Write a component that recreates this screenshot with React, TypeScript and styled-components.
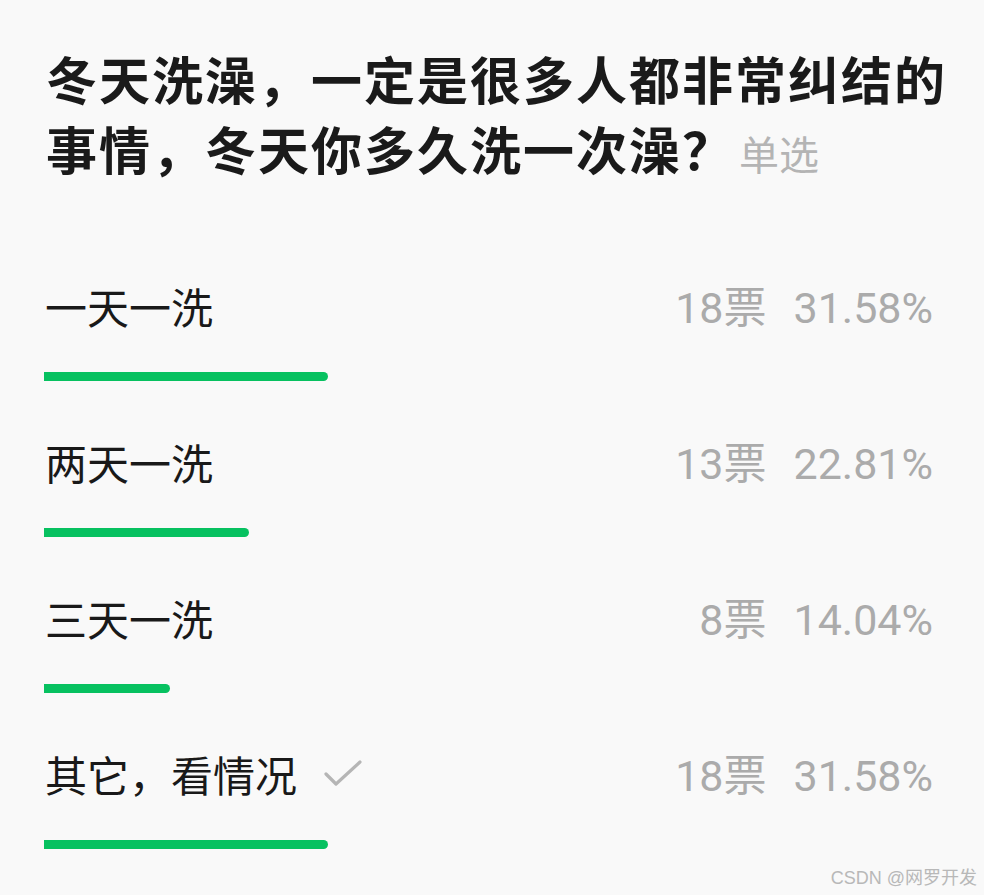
import React, { FC } from 'react';
import styled, { createGlobalStyle } from 'styled-components';

const GlobalStyle = createGlobalStyle`
  html, body {
    margin: 0;
    padding: 0;
    background: #f9f9f9;
  }
`;

const Page = styled.div`
  position: relative;
  box-sizing: border-box;
  width: 984px;
  height: 895px;
  padding: 43px 40px 0 44px;
  background: #f9f9f9;
  font-family: 'Noto Sans CJK SC', sans-serif;
  overflow: hidden;
`;

const Title = styled.h1`
  margin: 0 0 87px 2px;
  font-size: 51px;
  line-height: 70px;
  font-weight: 700;
  letter-spacing: 2px;
  color: #1a1a1a;
  white-space: nowrap;
`;

const Tag = styled.span`
  margin-left: 4px;
  font-size: 40px;
  font-weight: 400;
  letter-spacing: 0;
  color: #b4b4b4;
`;

const Option = styled.div`
  margin-bottom: 50px;
`;

const Header = styled.div`
  display: flex;
  align-items: center;
  justify-content: space-between;
  height: 60px;
  padding-right: 11px;
`;

const Label = styled.div`
  display: flex;
  align-items: center;
  gap: 27px;
  font-size: 42px;
  color: #191919;
  padding-left: 1px;
`;

const Stats = styled.div`
  display: flex;
  align-items: center;
  gap: 27px;
  padding-top: 5px;
  font-family: Roboto, 'Noto Sans CJK SC', sans-serif;
  font-size: 43px;
  line-height: 60px;
  color: #ababab;
`;

const Track = styled.div`
  margin-top: 37px;
  width: 900px;
  height: 9px;
`;

const Fill = styled.div`
  height: 100%;
  background: #07c160;
  border-radius: 0 5px 5px 0;
`;

const Watermark = styled.div`
  position: absolute;
  right: 7px;
  bottom: 6px;
  font-family: 'Liberation Sans', 'Noto Sans CJK SC', sans-serif;
  font-size: 18px;
  line-height: 22px;
  color: #b8b8b8;
`;

const Check: FC = () => (
  <svg width="38" height="26" viewBox="0 0 38 26">
    <polyline
      points="2,14 12,24 36,2"
      fill="none"
      stroke="#b5b5b5"
      strokeWidth="3.2"
      strokeLinecap="round"
      strokeLinejoin="round"
    />
  </svg>
);

const options = [
  { label: '一天一洗', votes: 18, pct: 31.58 },
  { label: '两天一洗', votes: 13, pct: 22.81 },
  { label: '三天一洗', votes: 8, pct: 14.04 },
  { label: '其它，看情况', votes: 18, pct: 31.58, picked: true },
];

const App: FC = () => (
  <>
    <GlobalStyle />
    <Page>
      <Title>
        冬天洗澡，一定是很多人都非常纠结的
        <br />
        事情，冬天你多久洗一次澡？<Tag>单选</Tag>
      </Title>
      {options.map((o) => (
        <Option key={o.label}>
          <Header>
            <Label>
              {o.label}
              {o.picked && <Check />}
            </Label>
            <Stats>
              <span>{o.votes}票</span>
              <span>{o.pct.toFixed(2)}%</span>
            </Stats>
          </Header>
          <Track>
            <Fill style={{ width: `${o.pct}%` }} />
          </Track>
        </Option>
      ))}
      <Watermark>CSDN @网罗开发</Watermark>
    </Page>
  </>
);

export default App;
